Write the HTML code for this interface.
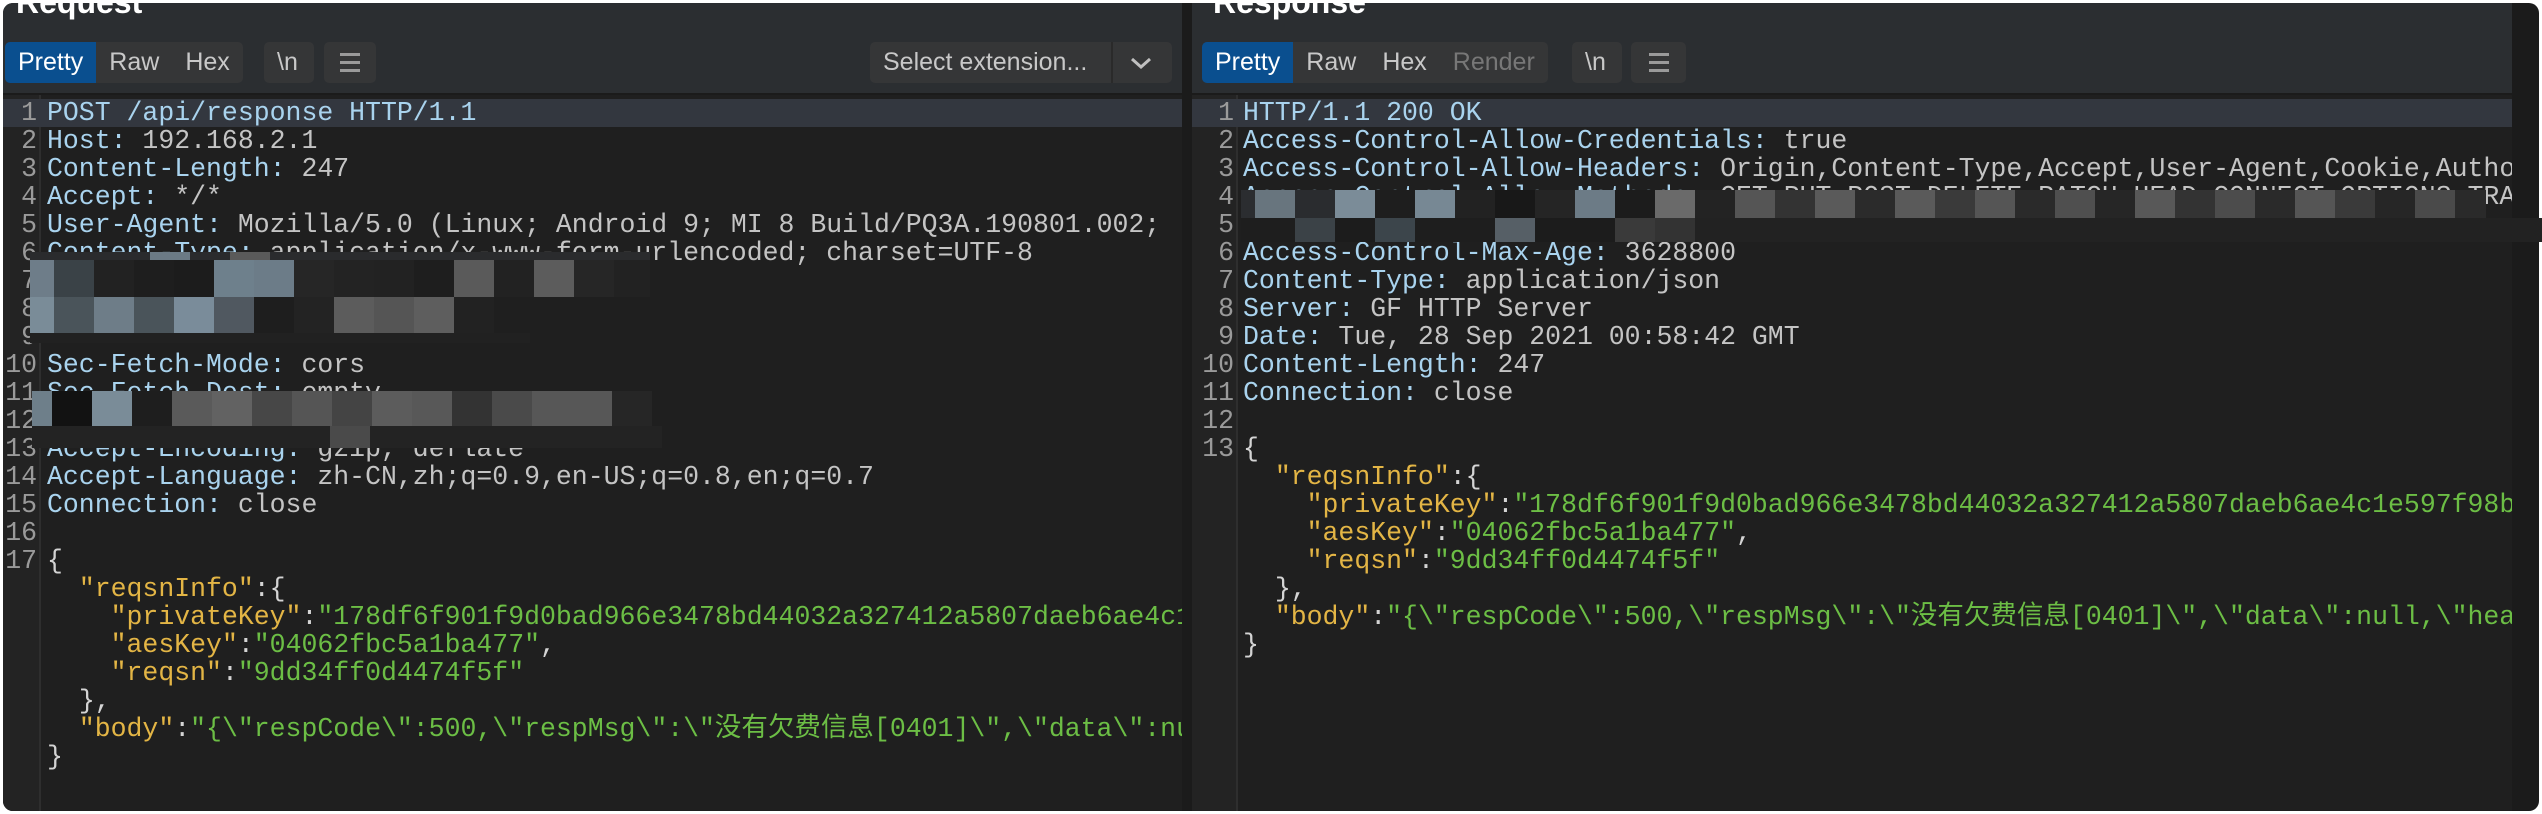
<!DOCTYPE html>
<html><head><meta charset="utf-8"><style>
*{margin:0;padding:0;box-sizing:border-box}
body{width:2542px;height:814px;background:#fff;position:relative;overflow:hidden;font-family:"Liberation Sans",sans-serif}
.outer{position:absolute;left:3px;top:3px;width:2536px;height:808px;background:#1b1b1b;border-radius:10px;overflow:hidden}
.hdr{position:absolute;top:0;height:90px;background:#2b2e31}
.title{position:absolute;top:-19px;font-size:32px;font-weight:bold;color:#fff}
.grp{position:absolute;top:39px;height:41px;background:#353637;border-radius:5px;display:flex;overflow:hidden}
.grp span{display:block;padding:0 13px;line-height:41px;font-size:25px;color:#c8c8c8}
.grp span.on{background:#0a4f8f;color:#fff}
.code{position:absolute;top:92px;bottom:0;background:#1f1f1f;overflow:hidden}
.gut{position:absolute;top:0;bottom:0;left:0;background:#232323;border-right:2px solid #2e2e2e}
pre{position:absolute;top:0;font-family:"Liberation Mono","Noto Sans CJK SC",monospace;font-size:26.5px;line-height:28px;white-space:pre;color:#c4c4c4}
.ln{text-align:right;color:#9a9a9a}
.hl{position:absolute;left:0;right:0;top:4px;height:28px;background:#33373f}
.k{color:#a9d3ee}.o{color:#e3b545}.g{color:#6cbe45}.p{color:#d4d4d4}
.b{position:absolute}
i{display:block;height:100%}
.menu{display:flex;flex-direction:column;justify-content:center;gap:5px;align-items:center}
.menu b{display:block;width:20px;height:3px;background:#9a9a9a}
</style></head><body>
<div class="outer">
 <div class="hdr" style="left:0;width:1179px"></div>
 <div class="hdr" style="left:1189px;width:1320px"></div>
 <div class="title" style="left:13px">Request</div>
 <div class="title" style="left:1210px">Response</div>
 <div class="grp" style="left:2px"><span class="on">Pretty</span><span>Raw</span><span>Hex</span></div>
 <div class="grp" style="left:261px;width:50px"><span>\n</span></div>
 <div class="grp menu" style="left:321px;width:52px"><b></b><b></b><b></b></div>
 <div class="grp" style="left:867px;width:302px"><span style="width:243px;border-right:2px solid #2a2a2a">Select extension...</span><svg width="57" height="41" viewBox="0 0 57 41"><path d="M19 17 L28 25 L37 17" stroke="#c0c0c0" stroke-width="3" fill="none"/></svg></div>
 <div class="grp" style="left:1199px"><span class="on">Pretty</span><span>Raw</span><span>Hex</span><span style="color:#777">Render</span></div>
 <div class="grp" style="left:1569px;width:50px"><span>\n</span></div>
 <div class="grp menu" style="left:1628px;width:55px"><b></b><b></b><b></b></div>

 <div class="code" style="left:0;width:1179px">
  <div class="gut" style="width:38px"></div>
  <div class="hl"></div>
  <pre class="ln" style="left:0;width:34px;top:4px">1
2
3
4
5
6
7
8
9
10
11
12
13
14
15
16
17</pre>
  <pre style="left:44px;top:4px"><span class="k">POST /api/response HTTP/1.1</span>
<span class="k">Host:</span> 192.168.2.1
<span class="k">Content-Length:</span> 247
<span class="k">Accept:</span> */*
<span class="k">User-Agent:</span> Mozilla/5.0 (Linux; Android 9; MI 8 Build/PQ3A.190801.002;
<span class="k">Content-Type:</span> application/x-www-form-urlencoded; charset=UTF-8


 
<span class="k">Sec-Fetch-Mode:</span> cors
<span class="k">Sec-Fetch-Dest:</span> empty

<span class="k">Accept-Encoding:</span> gzip, deflate
<span class="k">Accept-Language:</span> zh-CN,zh;q=0.9,en-US;q=0.8,en;q=0.7
<span class="k">Connection:</span> close

<span class="p">{</span>
  <span class="o">"reqsnInfo"</span><span class="p">:{</span>
    <span class="o">"privateKey"</span><span class="p">:</span><span class="g">"178df6f901f9d0bad966e3478bd44032a327412a5807daeb6ae4c1e597f98b"</span>
    <span class="o">"aesKey"</span><span class="p">:</span><span class="g">"04062fbc5a1ba477"</span><span class="p">,</span>
    <span class="o">"reqsn"</span><span class="p">:</span><span class="g">"9dd34ff0d4474f5f"</span>
  <span class="p">},</span>
  <span class="o">"body"</span><span class="p">:</span><span class="g">"{\"respCode\":500,\"respMsg\":\"没有欠费信息[0401]\",\"data\":null,\"head\"}"</span>
<span class="p">}</span></pre>
 </div>

 <div class="code" style="left:1189px;width:1320px">
  <div class="gut" style="width:46px"></div>
  <div class="hl"></div>
  <pre class="ln" style="left:0;width:42px;top:4px">1
2
3
4
5
6
7
8
9
10
11
12
13</pre>
  <pre style="left:51px;top:4px"><span class="k">HTTP/1.1 200 OK</span>
<span class="k">Access-Control-Allow-Credentials:</span> true
<span class="k">Access-Control-Allow-Headers:</span> Origin,Content-Type,Accept,User-Agent,Cookie,Authorization
<span class="k">Access-Control-Allow-Methods:</span> GET,PUT,POST,DELETE,PATCH,HEAD,CONNECT,OPTIONS,TRACE

<span class="k">Access-Control-Max-Age:</span> 3628800
<span class="k">Content-Type:</span> application/json
<span class="k">Server:</span> GF HTTP Server
<span class="k">Date:</span> Tue, 28 Sep 2021 00:58:42 GMT
<span class="k">Content-Length:</span> 247
<span class="k">Connection:</span> close

<span class="p">{</span>
  <span class="o">"reqsnInfo"</span><span class="p">:{</span>
    <span class="o">"privateKey"</span><span class="p">:</span><span class="g">"178df6f901f9d0bad966e3478bd44032a327412a5807daeb6ae4c1e597f98b"</span>
    <span class="o">"aesKey"</span><span class="p">:</span><span class="g">"04062fbc5a1ba477"</span><span class="p">,</span>
    <span class="o">"reqsn"</span><span class="p">:</span><span class="g">"9dd34ff0d4474f5f"</span>
  <span class="p">},</span>
  <span class="o">"body"</span><span class="p">:</span><span class="g">"{\"respCode\":500,\"respMsg\":\"没有欠费信息[0401]\",\"data\":null,\"head\"}"</span>
<span class="p">}</span></pre>
 </div>
</div>
<div style="position:absolute;left:0;top:0">
<div class="b" style="left:30px;top:252px;width:620px;height:8px;background:#2a2b2d"></div>
<div class="b" style="left:150px;top:252px;width:40px;height:8px;background:#6b7a85"></div>
<div class="b" style="left:230px;top:252px;width:40px;height:8px;background:#5a5a5a"></div>
<div style="position:absolute;left:30px;top:260px;height:37px;display:flex">
<i style="width:24px;background:#6e7d89"></i><i style="width:40px;background:#3a4247"></i><i style="width:40px;background:#222"></i><i style="width:40px;background:#1e1e1e"></i><i style="width:40px;background:#1c1c1c"></i><i style="width:40px;background:#6e808c"></i><i style="width:40px;background:#6c7c88"></i><i style="width:40px;background:#262626"></i><i style="width:40px;background:#232323"></i><i style="width:40px;background:#222"></i><i style="width:40px;background:#1e1e1e"></i><i style="width:40px;background:#5a5a5a"></i><i style="width:40px;background:#222"></i><i style="width:40px;background:#5c5c5c"></i><i style="width:40px;background:#262626"></i><i style="width:36px;background:#222"></i></div>
<div style="position:absolute;left:30px;top:297px;height:36px;display:flex">
<i style="width:24px;background:#7a8c98"></i><i style="width:40px;background:#4a545a"></i><i style="width:40px;background:#6e7d88"></i><i style="width:40px;background:#4a545a"></i><i style="width:40px;background:#7a8c9a"></i><i style="width:40px;background:#505860"></i><i style="width:40px;background:#1e1e1e"></i><i style="width:40px;background:#232323"></i><i style="width:40px;background:#5c5c5c"></i><i style="width:40px;background:#555"></i><i style="width:40px;background:#5e5e5e"></i><i style="width:40px;background:#222"></i></div>
<div class="b" style="left:30px;top:333px;width:500px;height:10px;background:#212121"></div>
<div style="position:absolute;left:32px;top:391px;height:35px;display:flex">
<i style="width:20px;background:#6e7f8a"></i><i style="width:40px;background:#121212"></i><i style="width:40px;background:#7a8c98"></i><i style="width:40px;background:#1e1e1e"></i><i style="width:40px;background:#5a5a5a"></i><i style="width:40px;background:#626262"></i><i style="width:40px;background:#474747"></i><i style="width:40px;background:#555"></i><i style="width:40px;background:#444"></i><i style="width:40px;background:#5c5c5c"></i><i style="width:40px;background:#585858"></i><i style="width:40px;background:#333"></i><i style="width:40px;background:#4a4a4a"></i><i style="width:40px;background:#575757"></i><i style="width:40px;background:#575757"></i><i style="width:40px;background:#262626"></i></div>
<div class="b" style="left:32px;top:426px;width:630px;height:22px;background:#232323"></div>
<div class="b" style="left:330px;top:426px;width:40px;height:22px;background:#4a4a4a"></div>
<div style="position:absolute;left:1241px;top:190px;height:28px;display:flex">
<i style="width:14px;background:#2b2d30"></i><i style="width:40px;background:#68757e"></i><i style="width:40px;background:#2a2c2f"></i><i style="width:40px;background:#7b8c98"></i><i style="width:40px;background:#1e1e1e"></i><i style="width:40px;background:#778894"></i><i style="width:40px;background:#222"></i><i style="width:40px;background:#181818"></i><i style="width:40px;background:#252525"></i><i style="width:40px;background:#6c7b86"></i><i style="width:40px;background:#1c1c1c"></i><i style="width:40px;background:#6a6a6a"></i><i style="width:40px;background:#232323"></i><i style="width:40px;background:#555"></i><i style="width:40px;background:#333"></i><i style="width:40px;background:#5a5a5a"></i><i style="width:40px;background:#2b2b2b"></i><i style="width:40px;background:#5a5a5a"></i><i style="width:40px;background:#3a3a3a"></i><i style="width:40px;background:#555"></i><i style="width:40px;background:#2a2a2a"></i><i style="width:40px;background:#4f4f4f"></i><i style="width:40px;background:#262626"></i><i style="width:40px;background:#585858"></i><i style="width:40px;background:#333"></i><i style="width:40px;background:#4c4c4c"></i><i style="width:40px;background:#2a2a2a"></i><i style="width:40px;background:#555"></i><i style="width:40px;background:#3a3a3a"></i><i style="width:40px;background:#262626"></i><i style="width:40px;background:#4a4a4a"></i><i style="width:31px;background:#2a2a2a"></i></div>
<div style="position:absolute;left:1241px;top:218px;height:24px;display:flex">
<i style="width:54px;background:#1e1e1e"></i><i style="width:40px;background:#3b4247"></i><i style="width:40px;background:#1c1c1c"></i><i style="width:40px;background:#3c454b"></i><i style="width:80px;background:#1e1e1e"></i><i style="width:40px;background:#565f66"></i><i style="width:80px;background:#1c1c1c"></i><i style="width:40px;background:#3a3a3a"></i><i style="width:40px;background:#333"></i><i style="width:900px;background:#222"></i></div>
</div>
</body></html>
